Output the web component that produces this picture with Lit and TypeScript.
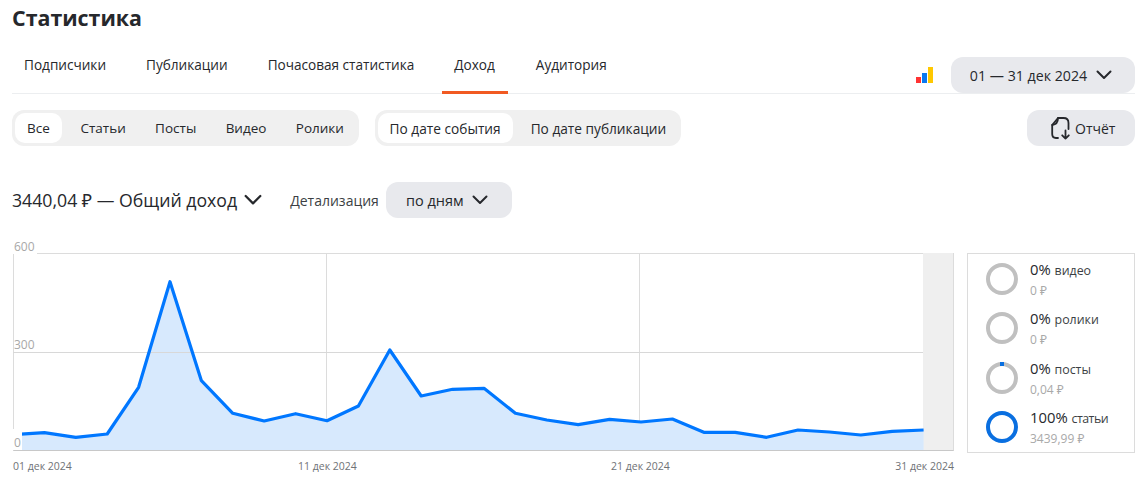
import { LitElement, html, css, svg } from "lit";
import { customElement } from "lit/decorators.js";

const X0 = 13;
const STEP = 31.4;
const YS = [434.6, 432.7, 437.3, 434, 387.3, 281.7, 380.7, 413.3, 421, 413.7, 420.7, 406, 350, 396, 389.3, 388.3, 413.3, 420, 424.7, 419.3, 422, 419, 432.3, 432.3, 437.3, 430, 432, 435, 431.3, 430];
const pts = YS.map((y, i) => `${(X0 + i * STEP).toFixed(1)},${y}`).join(" ");
const area = `${X0},450 ${pts} ${(X0 + 29 * STEP).toFixed(1)},450`;

const chev = (w = 16) => html`<svg class="chev" width=${w} height=${w} viewBox="0 0 16 16" fill="none"><path d="M1.5 4.5 8 11l6.5-6.5" stroke="#26282c" stroke-width="2" stroke-linecap="round" stroke-linejoin="round"/></svg>`;

const ring = (color: string, tick = false) => html`<svg class="ring" width="32" height="32" viewBox="0 0 32 32">
  <circle cx="16" cy="16" r="14" fill="none" stroke=${color} stroke-width="4"/>
  ${tick ? svg`<rect x="14" y="0" width="4" height="4" fill="#0a6fe0"/>` : ""}
</svg>`;

@customElement("app-root")
export class AppRoot extends LitElement {
  static styles = css`
    :host { display: block; width: 1140px; height: 477px; overflow: hidden; background: #fff; font-family: "Open Sans", "Noto Sans", sans-serif; color: #26282c; box-sizing: border-box; padding: 0 5px 0 12px; }
    h1 { margin: 0; font-size: 21.4px; line-height: 30px; font-weight: 700; padding-top: 3px; height: 33px; box-sizing: border-box; }
    .tabs-row { display: flex; align-items: flex-end; height: 60px; border-bottom: 1px solid #eceef0; box-sizing: content-box; }
    .tabs { display: flex; height: 60px; flex: 1; }
    .tab { position: relative; padding: 22px 12px 0; margin-right: 16px; font-size: 13.6px; line-height: 20px; }
    .tab.on { padding-right: 13px; }
    .tab.on::after { content: ""; position: absolute; left: 0; right: 0; bottom: -1px; height: 3px; background: #f15a22; }
    .logo { margin: 0 17px 9px 0; display: block; }
    .btn { display: flex; align-items: center; justify-content: center; background: #e8e9ed; border-radius: 12px; height: 36px; font-size: 14px; box-sizing: border-box; }
    .date { width: 184px; gap: 9px; font-size: 14.2px; padding-right: 4px; }
    .filters { display: flex; align-items: center; margin-top: 16px; height: 36px; gap: 16px; }
    .seg { display: flex; background: #f0f0f0; border-radius: 12px; padding: 3px 0 3px 3px; height: 36px; box-sizing: border-box; font-size: 13.7px; }
    .seg span { display: flex; align-items: center; padding: 0 15px; border-radius: 10px; }
    .seg span.on { background: #fff; padding: 0 12px; margin-right: 4px; }
    .seg1 { font-size: 13.5px; }
    .seg1 span { padding: 0 14.7px; }
    .seg2 span.on { margin-right: 3px; }
    .report { margin-left: auto; width: 108px; gap: 4px; font-size: 14px; justify-content: flex-start; padding-left: 24px; }
    .total { display: flex; align-items: center; margin-top: 36px; height: 36px; }
    .sum { font-size: 17.7px; margin-right: 7px; }
    .det { font-size: 14px; margin: 0 7px 0 28px; color: #3c3f44; }
    .days { width: 126px; gap: 8px; font-size: 14.5px; padding-right: 4px; }
    .stats { display: flex; margin-top: 35px; align-items: flex-start; margin-left: 1px; }
    .chart { position: relative; width: 941px; height: 198px; border: 1px solid #dcdcdc; border-bottom-color: #c8c8c8; box-sizing: border-box; flex: none; }
    .chart svg { display: block; position: absolute; left: -1px; top: -1px; }
    .yl { position: absolute; left: 0; font-size: 12px; line-height: 15px; color: #a8a8a8; background: #fff; }
    .y600 { top: -15px; left: -1px; padding: 0 2px 0 1px; }
    .y300 { top: 83px; background: none; }
    .y0 { top: 175px; left: -1px; padding: 6px 0 0 1px; width: 8px; }
    .xl { position: absolute; top: 205px; font-size: 10.5px; line-height: 14px; color: #6f7276; white-space: nowrap; }
    .x1 { left: -1px; }
    .x11 { left: 284px; }
    .x21 { left: 597px; }
    .x31 { right: -1px; }
    .legend { margin-left: 13px; width: 168px; height: 200px; border: 1px solid #dcdcdc; box-sizing: border-box; display: flex; flex-direction: column; padding: 9px 0 0 18px; gap: 15.3px; }
    .li { display: flex; gap: 12px; height: 34px; align-items: flex-start; }
    .ring { flex: none; }
    .txt { margin-top: -3px; }
    .l1 { font-size: 14.8px; line-height: 19px; white-space: nowrap; }
    .l1 small { font-size: 12.4px; color: #3c3f44; }
    .l1 small.tight { letter-spacing: -0.5px; }
    .l2 { font-size: 12px; line-height: 17px; margin-top: 2px; color: #a9a9a9; }
  `;

  render() {
    return html`
      <h1>Статистика</h1>
      <div class="tabs-row">
        <div class="tabs">
          <div class="tab">Подписчики</div>
          <div class="tab">Публикации</div>
          <div class="tab">Почасовая статистика</div>
          <div class="tab on">Доход</div>
          <div class="tab">Аудитория</div>
        </div>
        <svg class="logo" width="18" height="17" viewBox="0 0 18 17">
          <rect x="0" y="10" width="5" height="6" fill="#ff3333"/>
          <rect x="6" y="6" width="5" height="10" fill="#0a78f0"/>
          <rect x="12" y="0" width="5" height="16" fill="#ffc800"/>
        </svg>
        <div class="btn date">01 — 31 дек 2024 ${chev()}</div>
      </div>
      <div class="filters">
        <div class="seg seg1">
          <span class="on">Все</span><span>Статьи</span><span>Посты</span><span>Видео</span><span>Ролики</span>
        </div>
        <div class="seg seg2">
          <span class="on">По дате события</span><span>По дате публикации</span>
        </div>
        <div class="btn report">
          <svg width="20" height="24" viewBox="0 0 20 24" fill="none" stroke="#26282c" stroke-width="1.8" stroke-linecap="round" stroke-linejoin="round">
            <path d="M7 22H5C2.5 22 1.2 20.5 1.2 18V9L7 2H12.5C15.5 2 17.5 4 17.5 7V13"/>
            <path d="M7 2C7 6 5.5 8.5 1.2 9"/>
            <path d="M14.5 14.5V22.5M11.2 19.3 14.5 22.6 17.8 19.3"/>
          </svg>
          Отчёт
        </div>
      </div>
      <div class="total">
        <div class="sum">3440,04 ₽ — Общий доход</div>
        ${chev(18)}
        <div class="det">Детализация</div>
        <div class="btn days">по дням ${chev()}</div>
      </div>
      <div class="stats">
        <div class="chart">
          <svg width="941" height="198" viewBox="13 253 941 198">
            <rect x="923" y="253" width="30" height="197" fill="#efefef"/>
            <line x1="326.5" y1="253" x2="326.5" y2="450" stroke="#dcdcdc"/>
            <line x1="639.5" y1="253" x2="639.5" y2="450" stroke="#dcdcdc"/>
            <polygon points=${area} fill="#d7e9fd"/>
            <line x1="13" y1="352.5" x2="923" y2="352.5" stroke="#d8d8d8"/>
            <polyline points=${pts} fill="none" stroke="#0077ff" stroke-width="3.2" stroke-linejoin="round"/>
          </svg>
          <span class="yl y600">600</span>
          <span class="yl y300">300</span>
          <span class="yl y0">0</span>
          <span class="xl x1">01 дек 2024</span>
          <span class="xl x11">11 дек 2024</span>
          <span class="xl x21">21 дек 2024</span>
          <span class="xl x31">31 дек 2024</span>
        </div>
        <div class="legend">
          <div class="li">${ring("#c0c0c0")}<div class="txt"><div class="l1">0% <small>видео</small></div><div class="l2">0 ₽</div></div></div>
          <div class="li">${ring("#c0c0c0")}<div class="txt"><div class="l1">0% <small>ролики</small></div><div class="l2">0 ₽</div></div></div>
          <div class="li">${ring("#c0c0c0", true)}<div class="txt"><div class="l1">0% <small>посты</small></div><div class="l2">0,04 ₽</div></div></div>
          <div class="li">${ring("#0a6fe0")}<div class="txt"><div class="l1">100% <small class="tight">статьи</small></div><div class="l2">3439,99 ₽</div></div></div>
        </div>
      </div>
    `;
  }
}
